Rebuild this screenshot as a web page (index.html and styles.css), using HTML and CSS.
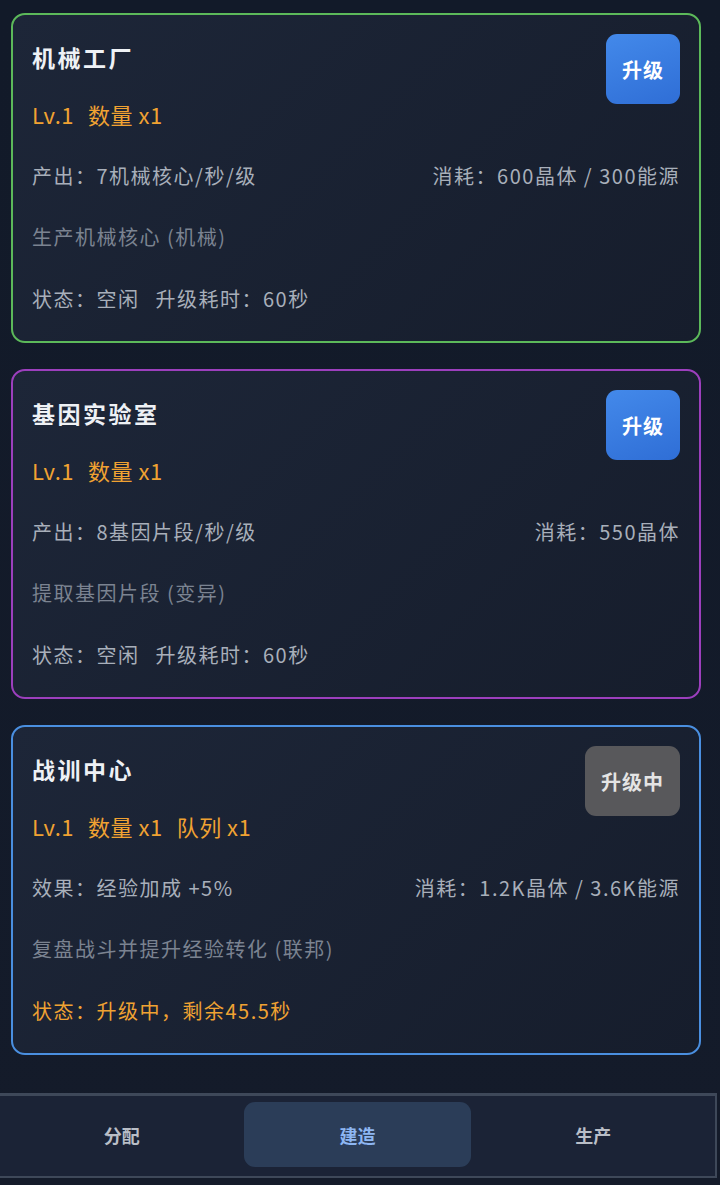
FILE: index.html
```html
<!DOCTYPE html>
<html lang="zh-CN">

<head>
    <meta charset="UTF-8">
    <meta name="viewport" content="width=device-width, initial-scale=1.0">
    <title>建造</title>
    <link rel="stylesheet" href="styles.css">
</head>

<body>

    <div class="list">
        <div class="card green">
            <div class="card-head">
                <h3>机械工厂</h3>
                <button class="btn">升级</button>
            </div>
            <div class="row stats"><span>Lv.1</span><span>数量 x1</span></div>
            <div class="row split">
                <span>产出：7机械核心/秒/级</span>
                <span>消耗：600晶体 / 300能源</span>
            </div>
            <div class="row desc">生产机械核心 (机械)</div>
            <div class="row"><span class="gap">状态：空闲</span><span>升级耗时：60秒</span></div>
        </div>

        <div class="card purple">
            <div class="card-head">
                <h3>基因实验室</h3>
                <button class="btn">升级</button>
            </div>
            <div class="row stats"><span>Lv.1</span><span>数量 x1</span></div>
            <div class="row split">
                <span>产出：8基因片段/秒/级</span>
                <span>消耗：550晶体</span>
            </div>
            <div class="row desc">提取基因片段 (变异)</div>
            <div class="row"><span class="gap">状态：空闲</span><span>升级耗时：60秒</span></div>
        </div>

        <div class="card blue">
            <div class="card-head">
                <h3>战训中心</h3>
                <button class="btn busy">升级中</button>
            </div>
            <div class="row stats"><span>Lv.1</span><span>数量 x1</span><span>队列 x1</span></div>
            <div class="row split">
                <span>效果：经验加成 +5%</span>
                <span>消耗：1.2K晶体 / 3.6K能源</span>
            </div>
            <div class="row desc">复盘战斗并提升经验转化 (联邦)</div>
            <div class="row warn">状态：升级中，剩余45.5秒</div>
        </div>
    </div>

    <nav class="tabs">
        <div class="tab">分配</div>
        <div class="tab active">建造</div>
        <div class="tab">生产</div>
    </nav>

</body>

</html>
```

FILE: styles.css
```css
*{
    margin: 0;
    box-sizing: border-box;
}
body{
    width: 720px;
    height: 1185px;
    overflow: hidden;
    background: linear-gradient(180deg, #121a29 0%, #141b2a 100%);
    font-family: "Noto Sans CJK SC", "Noto Sans", sans-serif;
    color: #a8afba;
}
.list{
    display: flex;
    flex-direction: column;
    gap: 26px;
    padding: 13px 19px 0 11px;
}
.card{
    height: 330px;
    padding: 19px 19px 12px 19px;
    border: 2px solid #4a90e2;
    border-radius: 14px;
    background: linear-gradient(135deg, #1d2638 0%, #161d2c 100%);
}
.card.green{
    border-color: #5cb95a;
}
.card.purple{
    border-color: #9c3fbd;
}
.card.blue{
    border-color: #4a8fe0;
}
.card-head{
    display: flex;
    justify-content: space-between;
    align-items: flex-start;
    height: 49px;
}
h3{
    font-size: 23px;
    font-weight: 700;
    line-height: 46px;
    letter-spacing: 2.5px;
    color: #eef1f5;
}
.btn{
    height: 70px;
    padding: 0 16px;
    border: none;
    border-radius: 11px;
    background: linear-gradient(160deg, #4389ea 0%, #2f6ed6 100%);
    color: #ffffff;
    font-family: inherit;
    font-size: 20px;
    font-weight: 700;
    letter-spacing: 1px;
}
.btn.busy{
    background: #58585b;
    color: #e4e4e4;
    padding: 0 16px;
}
.row{
    height: 61.5px;
    display: flex;
    align-items: center;
    font-size: 20px;
    letter-spacing: 1.5px;
}
.row.split{
    justify-content: space-between;
}
.stats{
    font-size: 22px;
    color: #f0a232;
    letter-spacing: 0.5px;
}
.stats span{
    margin-right: 14px;
}
.desc{
    color: #7b8391;
}
.gap{
    margin-right: 16px;
}
.warn{
    color: #f0a232;
}
.tabs{
    display: flex;
    gap: 8px;
    width: 717px;
    margin-top: 38px;
    padding: 6px 8px 9px 8px;
    border: 2px solid #3e4859;
    border-top-width: 3px;
    border-left: none;
    background: #1b2336;
}
.tab{
    flex: 1;
    height: 65px;
    display: flex;
    align-items: center;
    justify-content: center;
    border-radius: 11px;
    font-size: 18px;
    font-weight: 700;
    color: #b9bec7;
}
.tab.active{
    background: #2b3d58;
    color: #8db6f2;
}
```
